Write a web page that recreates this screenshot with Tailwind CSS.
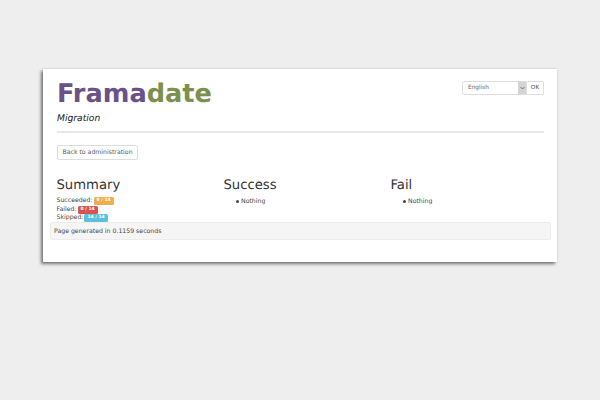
<!DOCTYPE html>
<html><head><meta charset="utf-8"><script src="https://cdn.jsdelivr.net/npm/@tailwindcss/browser@4"></script></head>
<body class="bg-[#eeeeee] h-[400px] overflow-hidden font-['DejaVu_Sans',sans-serif] text-[#333333] [text-rendering:geometricPrecision]">
<div class="ml-[43px] mt-[69px] w-[514px] h-[193px] bg-white opacity-[0.999] shadow-[-2px_2px_3px_rgba(0,0,0,0.5),0_0_2px_rgba(0,0,0,0.12)] pl-[7px] pr-[6px] pt-[9px] flex flex-col">
  <div class="pl-[7px] pr-[7px]">
    <div class="flex justify-between items-start">
      <div class="text-[25.6px] leading-[30px] font-bold mt-[1px]"><span class="text-[#6a5288]">Frama</span><span class="text-[#7d8f4d]">date</span></div>
      <form class="flex mt-[3px] text-[5.8px] text-[#666666]">
        <div class="w-[65px] h-[14px] border border-[#dddddd] rounded-l-[2px] flex justify-between items-stretch pl-[5px]">
          <span class="leading-[13px]">English</span>
          <span class="w-[8px] bg-[#d4d4d4] flex items-center justify-center"><svg width="5" height="4" viewBox="0 0 5 4"><path d="M0.5 1 L2.5 3 L4.5 1" fill="none" stroke="#555" stroke-width="0.8"/></svg></span>
        </div>
        <div class="w-[17px] h-[14px] border border-l-0 border-[#dddddd] rounded-r-[2px] text-center leading-[13px] text-[#555555]">OK</div>
      </form>
    </div>
    <div class="mt-[3px] text-[9.2px] leading-[14px] italic text-[#222222]">Migration</div>
    <div class="mt-[5px] h-[2px] bg-[#e8e8e8]"></div>
    <div class="mt-[12px] w-[81px] h-[15px] border border-[#dddddd] rounded-[2px] text-[6.2px] leading-[14px] text-center text-[#555555] whitespace-nowrap">Back to administration</div>
    <div class="mt-[18px] h-[44px] grid grid-cols-[167px_167px_167px] w-[501px] -ml-[0.5px]">
      <div>
        <h3 class="text-[13.2px] leading-[16px] text-[#333333]">Summary</h3>
        <div class="mt-[3px] text-[6.2px] leading-[8.6px] text-[#444444]">
          <div class="flex items-center gap-[1px]">Succeeded: <span class="bg-[#f0ad4e] text-white font-bold text-[4.5px] leading-[8px] px-[3px] rounded-[1.5px]">0 / 14</span></div>
          <div class="flex items-center gap-[1px]">Failed: <span class="bg-[#d9534f] text-white font-bold text-[4.5px] leading-[8px] px-[3px] rounded-[1.5px]">0 / 14</span></div>
          <div class="flex items-center gap-[1px]">Skipped: <span class="bg-[#5bc0de] text-white font-bold text-[4.5px] leading-[8px] px-[3px] rounded-[1.5px]">14 / 14</span></div>
        </div>
      </div>
      <div>
        <h3 class="text-[13.2px] leading-[16px] text-[#333333]">Success</h3>
        <ul class="mt-[3px] text-[6.2px] leading-[9px] text-[#444444] pl-[12.5px]"><li class="flex items-center gap-[2.5px]"><span class="w-[2.5px] h-[2.5px] rounded-full bg-[#444444]"></span>Nothing</li></ul>
      </div>
      <div>
        <h3 class="text-[13.2px] leading-[16px] text-[#333333]">Fail</h3>
        <ul class="mt-[3px] text-[6.2px] leading-[9px] text-[#444444] pl-[12.5px]"><li class="flex items-center gap-[2.5px]"><span class="w-[2.5px] h-[2.5px] rounded-full bg-[#444444]"></span>Nothing</li></ul>
      </div>
    </div>
  </div>
  <div class="h-[18px] w-[501px] bg-[#f5f5f5] border border-[#ececec] rounded-[2px] px-[3px] text-[6.2px] leading-[18px] text-[#444444]">Page generated in 0.1159 seconds</div>
</div>
</body></html>
